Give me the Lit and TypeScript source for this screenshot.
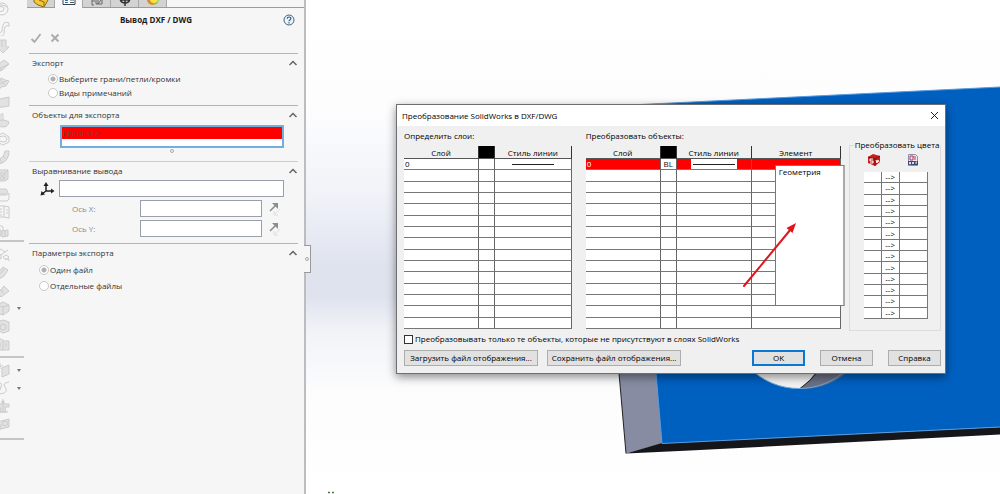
import { LitElement, html, svg, css, nothing, TemplateResult } from "lit";
import { customElement, property } from "lit/decorators.js";
import { classMap } from "lit/directives/class-map.js";

const FONT = css`"Open Sans", "Noto Sans", sans-serif`;

/* ---------- feature rail ---------- */

interface Tool {
  name: string;
  art: TemplateResult;
  menu?: boolean;
}

const RAIL: Tool[][] = [
  [
    { name: "Повернутая бобышка", art: svg`<ellipse cx="8" cy="8" rx="6" ry="6"/><ellipse cx="7" cy="8" rx="3" ry="2.5"/><path d="M2 6q5-4 11 0"/>` },
    { name: "По траектории", art: svg`<path d="M15 3q-5-2-6 2t-1 6-6 3M15 6q-3-1-4 1t-1 6-6 3M15 3v3"/>` },
    { name: "По сечениям", art: svg`<path class="f" d="M5 2h7v7h3l-6 6-6-6h2z"/><path d="M8 2v7"/>` },
    { name: "Граница", art: svg`<path class="f" d="M2 9l8-6 5 4-8 7-5-2z"/><path d="M2 9l5 2 8-4M7 11v3"/>` },
    { name: "Вырез", art: svg`<path class="f" d="M2 9l4-3 1-3 4 2 4 1-3 5-5 1-2 3z"/><path d="M4 10l8-4M7 6l4 4"/>` },
    { name: "Плоскость", art: svg`<path class="f" d="M2 6l13-3v9L2 14z"/>` },
    { name: "Отверстие", art: svg`<path class="f" d="M3 10q6-4 12 0-1 5-6 5t-6-5z"/><path d="M7 2v6M9 2v6M7 2h2"/>` },
    { name: "Скругление", art: svg`<path d="M3 5l6-3 6 4v5l-6 3-6-3z"/><ellipse cx="9" cy="8" rx="4" ry="3"/>` },
    { name: "Купол", art: svg`<path class="f" d="M15 2q0 11-10 13l-3-4q8-1 9-9z"/><path d="M12 10l-3-3M8 14l-2-4"/>` },
    { name: "Массив", art: svg`<path class="f" d="M4 3h10v9l-3 2H3V5z"/><path d="M5 6h6v6H5zM6 7l4 4M10 7l-4 4M11 6l3-3"/>` },
    { name: "Оболочка", art: svg`<path class="f" d="M4 3h8l2 3-2 2H3z"/><path d="M2 9h11l2-2v6l-2 2H2z"/>` },
    { name: "Линейный массив", art: svg`<path d="M4 2h6l5 1v11l-5-1H4zM10 2v11M4 4v9M6 5h2M6 8h2M6 11h2M12 6h2M12 9h2"/>` },
    { name: "Уклон", art: svg`<path class="f" d="M8 8l6-1v6l-6 1zM2 7h5v6H2z"/><path d="M3 7V4q3-3 6 0v4M11 8v5"/>` },
  ],
  [
    { name: "Переместить", art: svg`<path d="M3 6l4-3 4 3-4 3zM9 11l3-2 3 2-3 3zM3 6v4l4 3V9M11 6l3-2M11 13h4v2"/>` },
    { name: "Удалить грань", art: svg`<path class="f" d="M2 11l7-8 5 3-4 6-5 3z"/><path d="M5 11l5-6"/>` },
    { name: "Заменить грань", art: svg`<path class="f" d="M2 9l5-1 3-4 5 5-8 6z"/><path d="M7 8l2 3"/>` },
    { name: "Сгиб", art: svg`<path class="f" d="M3 5l6-3 6 3v6l-6 4-6-2z"/><path d="M3 5l6 2 6-2M9 7v8"/>`, menu: true },
    { name: "Разделить", art: svg`<path class="f" d="M3 4l6-2 6 2v9l-6 2-6-3z"/><circle cx="9" cy="9" r="3"/>` },
    { name: "Объединить", art: svg`<path class="f" d="M2 5q5-4 8 0h5v9H9q-5 1-7-2z"/><path d="M9 5v9M6 7v5M12 7v4"/>` },
  ],
  [
    { name: "Справочная геометрия", art: svg`<path class="f" d="M8 6l7-3v9l-7 3z"/><path d="M6 1v6M3 4h6M4 7l-1 3"/>`, menu: true },
    { name: "Кривые", art: svg`<path d="M3 4q6-3 4 3t-2 5q1 3 5 1t1-6 4-5"/>`, menu: true },
    { name: "Баланс", art: svg`<path class="f" d="M8 3h2v3h5v3h-4l1 5H6l1-4H3V6h5z"/><path d="M5 14h9M9 1v12"/>` },
    { name: "Снимок", art: svg`<path class="f" d="M3 6l12-3v8L3 14z"/><circle cx="11" cy="7.5" r="2.5"/><path d="M4 7l3 2v4"/>` },
  ],
];

@customElement("feature-rail")
class FeatureRail extends LitElement {
  static styles = css`
    :host { display: block; width: 29px; flex: none; overflow: hidden; }
    .group { display: flex; flex-direction: column; width: 24px; border-bottom: 2px solid #c6c6c6; box-sizing: border-box; }
    .long { height: 242px; }
    .mid { height: 116px; padding: 3px 0; }
    .short { height: 82px; padding: 3px 0 5px; }
    .tool { flex: 1; min-height: 0; display: flex; align-items: center; justify-content: space-between; margin: 0 0 0 -6px; padding: 0 3px 0 0; border: 0; background: none; }
    .art { width: 16px; height: 16px; fill: none; stroke: #cbcbcb; stroke-width: 1; }
    .f { fill: #e2e2e2; }
    .drop { border: 2px solid transparent; border-top: 3px solid #777; border-bottom: 0; }
  `;
  render() {
    const sizes = ["long", "mid", "short"];
    return RAIL.map((group, i) => html`
      <div class="group ${sizes[i]}" role="toolbar">
        ${group.map((t) => html`
          <button class="tool" aria-label=${t.name}>
            <svg class="art" viewBox="0 0 16 16">${t.art}</svg>
            ${t.menu ? html`<span class="drop"></span>` : nothing}
          </button>`)}
      </div>`);
  }
}

/* ---------- property panel ---------- */

@customElement("panel-section")
class PanelSection extends LitElement {
  @property() heading = "";
  static styles = css`
    :host { display: block; margin: 0 6px 0 0; border-top: 1px solid #b4b4b4; }
    .head { display: flex; align-items: center; justify-content: space-between; height: 18px; padding: 0 0 0 3px; }
    .title { margin: 0; font: 8px/12px ${FONT}; color: #333; }
    .fold { display: flex; padding: 0; border: 0; background: none; }
    .chev { width: 10px; height: 8px; fill: none; stroke: #666; stroke-width: 1.5; }
  `;
  render() {
    return html`
      <div class="head">
        <h2 class="title">${this.heading}</h2>
        <button class="fold" aria-label="Свернуть"><svg class="chev" viewBox="0 0 10 8"><path d="M1.5 6L5 2.5 8.5 6"/></svg></button>
      </div>
      <slot></slot>`;
  }
}

const flipIcon = html`<svg class="flip" viewBox="0 0 14 14">
  <path d="M2 9L8 3" stroke="#8c8c8c" stroke-width="1.6"/><path d="M4 1h6v6z" fill="#8c8c8c"/>
  <path d="M12 7l-5 5M6 9v4h4" stroke="#dcdcdc" fill="none"/></svg>`;

@customElement("export-panel")
class ExportPanel extends LitElement {
  static styles = css`
    :host { display: block; position: relative; z-index: 1; flex: none; width: 275px; background: #f6f6f6; border-right: 2px solid #bcbdc0; font: 8px/12px ${FONT}; color: #333; }
    .tabs { display: flex; height: 7px; margin-left: -2px; border-bottom: 1px solid #9b9b9b; }
    .tab { display: flex; justify-content: center; align-items: flex-end; width: 28px; height: 7px; box-sizing: border-box; padding: 0; overflow: hidden; border: 0; border-right: 1px solid #a8a8a8; background: #d3d3d3; }
    .active { height: 8px; background: #f8f8f8; padding-bottom: 1px; }
    .tabart { width: 16px; height: 7px; flex: none; }
    .top { display: flex; align-items: center; height: 24px; padding: 0 9px 0 0; }
    .name { flex: 1; margin: 0; font-size: 8px; font-weight: 700; color: #1c1c1c; text-align: center; }
    .help { display: flex; padding: 0; border: 0; background: none; }
    .helpart { width: 12px; height: 12px; }
    .actions { display: flex; gap: 7px; height: 21px; padding: 0 0 0 1px; align-items: flex-start; }
    .act { display: flex; padding: 0; border: 0; background: none; }
    .actart { width: 12px; height: 12px; fill: none; stroke: #aaa; stroke-width: 1.8; }
    .radio { display: flex; align-items: center; gap: 1px; height: 14px; }
    .one { padding-left: 19px; }
    .two { padding-left: 10px; height: 16px; }
    .dot { appearance: none; width: 10px; height: 10px; margin: 0; border: 1px solid #c8c8c8; border-radius: 50%; background: #fff; }
    .dot:checked { background: radial-gradient(circle, #b0b0b0 2px, #fff 3px); }
    .s1 { height: 51px; }
    .s2 { height: 55px; }
    .s3 { height: 81px; border-top-color: #ccc; }
    .list { list-style: none; margin: 1px 14px 0 31px; padding: 0; height: 19px; border: 2px solid #71b0dc; background: #fff; }
    .picked { height: 12px; line-height: 12px; padding-left: 1px; background: #f00; color: #5c4840; }
    .grip { display: block; width: 2px; height: 2px; border: 1px solid #aaa; border-radius: 50%; }
    .list + .grip { margin: 1px auto 0 141px; }
    .row { display: flex; align-items: center; height: 17px; margin-bottom: 3px; }
    .axis { width: 16px; height: 16px; flex: none; margin: 0 4px 0 10px; }
    .box { box-sizing: border-box; flex: 1; min-width: 0; height: 17px; margin: 0 14px 0 0; padding: 0 2px; border: 1px solid #9aa0ab; background: #fff; font: 8px/12px ${FONT}; }
    .axlabel { width: 68px; padding-left: 43px; color: #8a8a8a; }
    .narrow { margin-right: 6px; }
    .flipbtn { display: flex; padding: 0; margin-right: 16px; border: 0; background: none; }
    .flip { width: 14px; height: 14px; }
    .collapse { position: absolute; right: -7px; top: 245px; display: flex; align-items: center; justify-content: center; width: 7px; height: 28px; box-sizing: border-box; padding: 0; border: 1px solid #999; border-left: 0; background: #f6f6f6; }
  `;
  private radio(group: string, text: string, on: boolean, kind: string) {
    return html`<label class="radio ${kind}"><input class="dot" type="radio" name=${group} ?checked=${on}>${text}</label>`;
  }
  render() {
    const tabs = [
      { n: "Дерево", a: svg`<path d="M1-3l8-2 6 5-4 7-6-2-4-3z" fill="#f3c63a" stroke="#8a6a12"/><path d="M6 0l5 2v4" fill="none" stroke="#8a6a12"/>` },
      { n: "Свойства", a: svg`<path d="M2-5h12V4.500H2z" fill="#fff" stroke="#345"/><path d="M4-1h3v2H4zM4 2h3v1H4z" fill="#2b74b8"/><path d="M9 0h4M9 2.500h4" stroke="#555"/>` },
      { n: "Конфигурации", a: svg`<path d="M3-4v9h2M3 1h3M7-2h6v6H7zM9 4l3-4M9 0v4" fill="none" stroke="#666"/>` },
      { n: "Размеры", a: svg`<path d="M3-3q0 6 5 6t5-6M8-5v11M3 0h10" fill="none" stroke="#333" stroke-width="1.500"/>` },
      { n: "Отображение", a: svg`<circle cx="8" cy="-1" r="6" fill="#8cc63f"/><path d="M8-1H2a6 6 0 0 0 6 6z" fill="#e08a2c"/><circle cx="9" cy="-1" r="4" fill="#f4e04a"/>` },
    ];
    return html`
      <div class="tabs" role="tablist">
        ${tabs.map((t, i) => html`<button role="tab" aria-label=${t.n} class=${classMap({ tab: true, active: i === 1 })}>
          <svg class="tabart" viewBox="0 0 16 7">${t.a}</svg></button>`)}
      </div>
      <div class="top">
        <h1 class="name">Вывод DXF / DWG</h1>
        <button class="help" aria-label="Справка"><svg class="helpart" viewBox="0 0 12 12">
          <circle cx="6" cy="6" r="5" fill="#eef5fa" stroke="#41647c"/>
          <path d="M4.200 4.700q.1-1.700 1.900-1.700t1.800 1.500q0 .9-1 1.500-.9.500-.9 1.300M6 8.300v1.200" fill="none" stroke="#2d5570" stroke-width="1.200"/></svg></button>
      </div>
      <div class="actions">
        <button class="act" aria-label="Применить"><svg class="actart" viewBox="0 0 12 12"><path d="M1.500 7l3 3 6-8"/></svg></button>
        <button class="act" aria-label="Закрыть"><svg class="actart" viewBox="0 0 12 12"><path d="M2.500 2.500l7 7M9.500 2.500l-7 7"/></svg></button>
      </div>
      <panel-section class="s1" heading="Экспорт">
        ${this.radio("what", "Выберите грани/петли/кромки", true, "one")}
        ${this.radio("what", "Виды примечаний", false, "one")}
      </panel-section>
      <panel-section class="s2" heading="Объекты для экспорта">
        <ul class="list" role="listbox" aria-label="Объекты для экспорта"><li class="picked" role="option">Грань&lt;1&gt;</li></ul>
        <span class="grip"></span>
      </panel-section>
      <panel-section class="s3" heading="Выравнивание вывода">
        <div class="row">
          <svg class="axis" viewBox="0 0 16 16"><path d="M7 3v7h6M7 10l-4 3" fill="none" stroke="#222" stroke-width="1.500"/><path d="M7 1L4.500 5h5zM15.500 10L12 7.500v5zM1.500 14.500l1-4.500 3.500 3.500z" fill="#222"/></svg>
          <input class="box" aria-label="Система координат">
        </div>
        <div class="row"><label class="axlabel" for="x">Ось X:</label><input class="box narrow" id="x"><button class="flipbtn" aria-label="Обратить X">${flipIcon}</button></div>
        <div class="row"><label class="axlabel" for="y">Ось Y:</label><input class="box narrow" id="y"><button class="flipbtn" aria-label="Обратить Y">${flipIcon}</button></div>
      </panel-section>
      <panel-section heading="Параметры экспорта">
        ${this.radio("files", "Один файл", true, "two")}
        ${this.radio("files", "Отдельные файлы", false, "two")}
      </panel-section>
      <button class="collapse" aria-label="Скрыть панель"><span class="grip"></span></button>`;
  }
}

/* ---------- mapping dialog ---------- */

const blank = (n: number) => Array.from({ length: n });

@customElement("map-dialog")
class MapDialog extends LitElement {
  static styles = css`
    :host { display: block; box-sizing: border-box; border: 1px solid #6d6f73; background: #f0f0f0; box-shadow: 0 3px 9px rgba(0, 0, 0, 0.45); font: 8px/12px ${FONT}; color: #000; }
    .bar { display: flex; align-items: center; justify-content: space-between; height: 21px; padding: 0 6px 0 5px; background: #fff; }
    .title { margin: 0; font-size: 8px; font-weight: 400; }
    .close { display: flex; padding: 0; border: 0; background: none; }
    .x { width: 9px; height: 9px; stroke: #222; fill: none; }
    .body { padding: 3px 4px 7px 7px; }
    .cols { display: flex; align-items: flex-start; }
    .layers { flex: 167 1 167px; min-width: 0; }
    .objects { flex: 254 1 254px; min-width: 0; margin-left: 14px; position: relative; }
    .caption { margin: 1px 0 4px; }
    .grid { width: 100%; height: 183px; table-layout: fixed; border-spacing: 0; background: #fff; }
    .grid th { height: 12px; padding: 0; font-weight: 400; line-height: 11px; background: #f0f0f0; border-bottom: 1px solid #555; border-right: 1px solid #333; }
    .grid td { padding: 0 0 0 1px; line-height: 10px; height: 10px; border-bottom: 1px solid #777; border-right: 1px solid #666; white-space: nowrap; }
    .grid .swatch { background: #000; }
    .wide { width: 75px; }
    .thin { width: 16px; }
    .rule { display: block; width: 42px; height: 1px; margin: 0 auto; background: #222; }
    .grid .hot td { background: #f00; color: #fff; }
    .grid .hot .bl { background: #fff; color: #111; text-align: center; padding: 0; }
    .chip { display: flex; align-items: center; width: 46px; height: 10px; margin: 0 auto; background: #fff; }
    .popup { position: absolute; right: -4px; top: 36px; width: 70px; height: 141px; box-sizing: border-box; list-style: none; margin: 0; padding: 0 3px; background: #fff; border: 1px solid #777; border-right: 2px solid #aaa; }
    .arrow { position: absolute; right: 41px; top: 92px; width: 58px; height: 68px; }
    .colors { flex: 92 1 92px; min-width: 0; box-sizing: border-box; height: 192px; margin: 10px 0 0 8px; padding: 3px 12px 10px 14px; border: 1px solid #dcdcdc; }
    .legend { margin-left: -10px; padding: 0 1px; white-space: nowrap; }
    .icons { display: flex; justify-content: space-between; padding: 0 9px 6px 4px; }
    .ico { width: 12px; height: 12px; }
    .pairs { width: 100%; height: 147px; table-layout: fixed; border-spacing: 0; background: #fff; }
    .pairs td { padding: 0; height: 10px; line-height: 10px; text-align: center; border-bottom: 1px solid #777; border-right: 1px solid #777; }
    .src { width: 18px; }
    .only { display: flex; align-items: center; gap: 2px; height: 12px; margin: 2px 0 5px; }
    .tick { appearance: none; width: 9px; height: 9px; margin: 0; border: 1px solid #333; background: #fff; box-sizing: border-box; }
    .foot { display: flex; align-items: center; gap: 15px; }
    .btn { height: 16px; min-width: 53px; box-sizing: border-box; padding: 0; border: 1px solid #adadad; background: #e1e1e1; font: 8px/12px ${FONT}; color: #000; white-space: nowrap; }
    .file { min-width: 134px; }
    .load { margin-right: -6px; }
    .ok { margin-left: auto; border: 2px solid #0a78d2; }
  `;
  render() {
    return html`
      <div class="bar">
        <h2 class="title">Преобразование SolidWorks в DXF/DWG</h2>
        <button class="close" aria-label="Закрыть"><svg class="x" viewBox="0 0 9 9"><path d="M1 1l7 7M8 1L1 8"/></svg></button>
      </div>
      <div class="body">
        <div class="cols">
          <section class="layers">
            <p class="caption">Определить слои:</p>
            <table class="grid">
              <colgroup><col class="wide"><col class="thin"><col></colgroup>
              <thead><tr><th>Слой</th><th class="swatch"></th><th>Стиль линии</th></tr></thead>
              <tbody>
                <tr><td>0</td><td></td><td><span class="rule"></span></td></tr>
                ${blank(14).map(() => html`<tr><td></td><td></td><td></td></tr>`)}
              </tbody>
            </table>
          </section>
          <section class="objects">
            <p class="caption">Преобразовать объекты:</p>
            <table class="grid">
              <colgroup><col class="wide"><col class="thin"><col class="wide"><col></colgroup>
              <thead><tr><th>Слой</th><th class="swatch"></th><th>Стиль линии</th><th>Элемент</th></tr></thead>
              <tbody>
                <tr class="hot"><td>0</td><td class="bl">BL</td><td><span class="chip"><span class="rule"></span></span></td><td></td></tr>
                ${blank(14).map(() => html`<tr><td></td><td></td><td></td><td></td></tr>`)}
              </tbody>
            </table>
            <ul class="popup" role="listbox" aria-label="Элемент"><li role="option">Геометрия</li></ul>
            <svg class="arrow" viewBox="0 0 58 68"><path d="M2 65L49 8" stroke="#e0141c" stroke-width="2" stroke-linecap="round"/><path d="M54 2L50.500 12 44.500 7z" fill="#e0141c"/></svg>
          </section>
          <fieldset class="colors">
            <legend class="legend">Преобразовать цвета</legend>
            <div class="icons">
              <svg class="ico" viewBox="0 0 12 12"><path d="M0 3l5-3 7 2v6l-5 4-7-3z" fill="#c81e1e"/><path d="M0 3l7 2 5-3M7 5v7" stroke="#7d0d0d" fill="none"/><path d="M5 5H2v2h3v2H2M8 6l1 3 1-3 1 2" stroke="#fff" fill="none"/></svg>
              <svg class="ico" viewBox="0 0 12 12"><path d="M1.500.5h7l2 2v9h-9z" fill="#f3e6ec" stroke="#8b8fae"/><path d="M3 2h3v4H3zM6 3h3M7 5h2" stroke="#b34060" fill="none"/><path d="M1 7h10v4H1z" fill="#3d4a78"/><path d="M2.500 8v2h1V8M5 8l2 2M7 8l-2 2M9 10V8h1" stroke="#fff" stroke-width=".8" fill="none"/></svg>
            </div>
            <table class="pairs">
              <colgroup><col class="src"><col class="src"><col></colgroup>
              <tbody>${blank(13).map(() => html`<tr><td></td><td>--&gt;</td><td></td></tr>`)}</tbody>
            </table>
          </fieldset>
        </div>
        <label class="only"><input class="tick" type="checkbox">Преобразовывать только те объекты, которые не присутствуют в слоях SolidWorks</label>
        <div class="foot">
          <button class="btn file load">Загрузить файл отображения...</button>
          <button class="btn file">Сохранить файл отображения...</button>
          <button class="btn ok">OK</button>
          <button class="btn">Отмена</button>
          <button class="btn">Справка</button>
        </div>
      </div>`;
  }
}

/* ---------- page ---------- */

@customElement("app-root")
class AppRoot extends LitElement {
  static styles = css`
    :host { display: flex; min-height: 100vh; overflow: hidden; background: #f6f6f6; }
    .view { position: relative; flex: 1; min-width: 0; overflow: hidden; background: linear-gradient(to bottom, #fff 0, #fdfdfe 22%, #f0f2f8 40%, #dfe3ee 54%, #dfe3ee 60%, #f1f3f7 67%, #fcfcfd 79%, #fff); }
    .scene { position: absolute; left: 0; top: 0; width: 100%; height: 100%; }
    .dialog { position: absolute; left: 90px; top: 104px; width: 550px; }
  `;
  render() {
    return html`
      <feature-rail></feature-rail>
      <export-panel></export-panel>
      <main class="view">
        <svg class="scene" viewBox="306 0 694 494" preserveAspectRatio="xMinYMin slice">
          <path d="M600 110L619 373 626 453.500 662 443.500 650 110z" fill="#878ca2"/>
          <path d="M600 110L619 373 626 453.500" fill="none" stroke="#222"/>
          <path d="M626 453.500L662 443 1000 427V434.500L690 450.500z" fill="#15161a"/>
          <path d="M630 105L1000 87V427L662 443.500 656 373z" fill="#0060c0"/>
          <path d="M630 105L1000 87M1000 427L662 443.500 656 373" fill="none" stroke="#5b9bdc"/>
          <circle cx="799" cy="318.500" r="70" fill="#f3f3f4"/>
          <path d="M817 370q-6 10-17 18.500 26 2 50-18.500z" fill="#6b7084"/>
          <path d="M819 370q-8 11-19 18.500" fill="none" stroke="#222"/>
          <circle cx="799" cy="318.500" r="70" fill="none" stroke="#6ea6de"/>
          <path d="M328 492.500h2M332 492.500h2" stroke="#3f7a45" stroke-width="1.500"/>
        </svg>
        <map-dialog class="dialog" role="dialog" aria-label="Преобразование SolidWorks в DXF/DWG"></map-dialog>
      </main>`;
  }
}
